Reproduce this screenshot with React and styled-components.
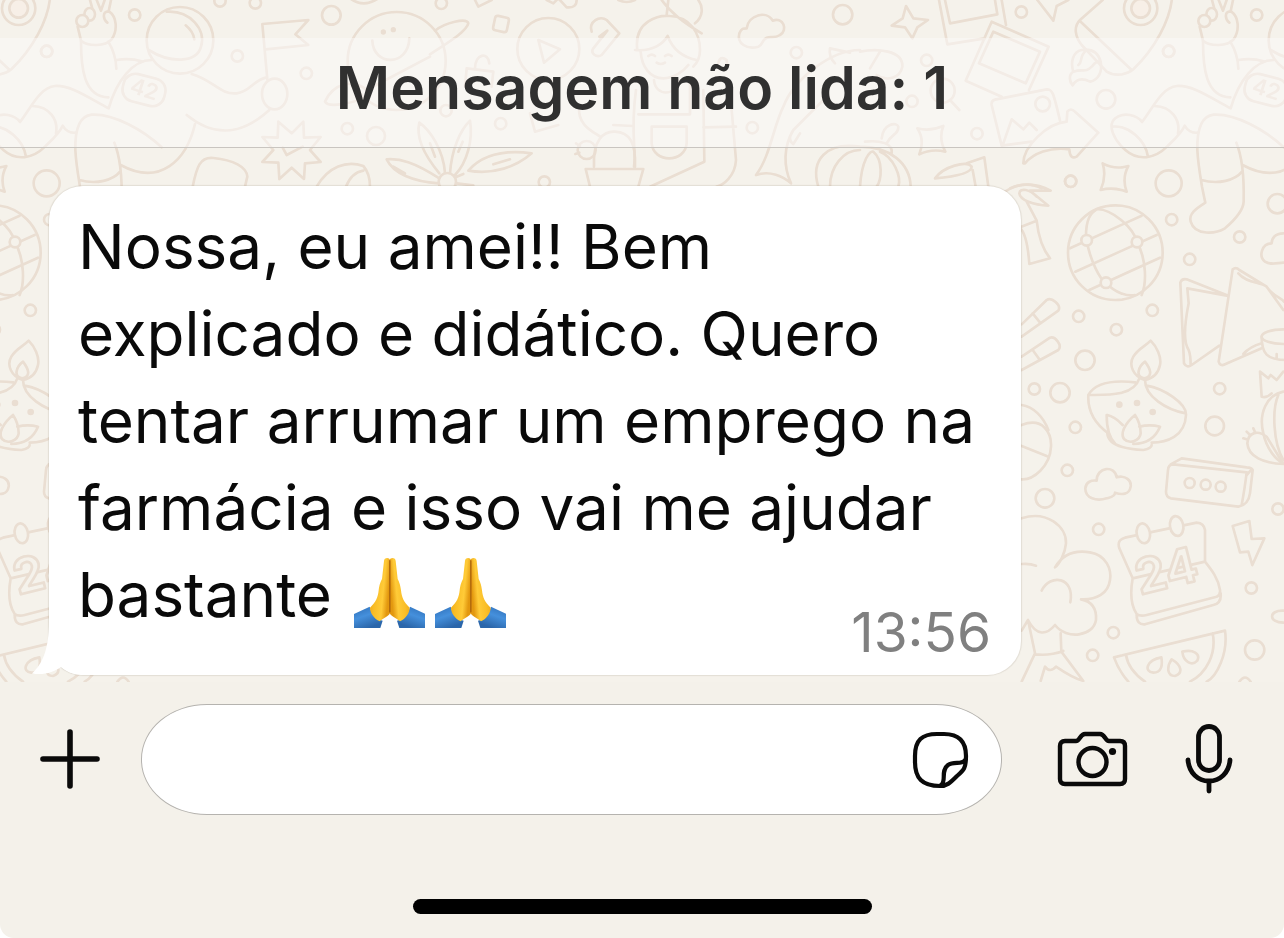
import React from "react";
import styled, { createGlobalStyle } from "styled-components";

const GlobalStyle = createGlobalStyle`
  * { box-sizing: border-box; }
  body {
    margin: 0;
    background: #ffffff;
    font-family: Inter, "Liberation Sans", sans-serif;
    color: #0a0a0a;
  }
`;

const Screen = styled.div`
  display: flex;
  flex-direction: column;
  min-height: 100vh;
  background: #f4f1ea;
  border-radius: 0 0 14px 14px;
  overflow: hidden;
`;

const Chat = styled.main`
  position: relative;
  flex: 1;
  padding: 38px 0 7px;
  background: #f5f2eb;
`;

const Wallpaper = styled.svg`
  position: absolute;
  inset: 0;
  width: 100%;
  height: 100%;
`;

const UnreadBanner = styled.h1`
  position: relative;
  margin: 0 0 38px;
  padding: 12px 16px 21px;
  border-bottom: 1px solid #c9c5c0;
  background: rgba(251, 250, 249, 0.5);
  color: #303030;
  font-size: 59px;
  font-weight: 600;
  line-height: 76px;
  text-align: center;
`;

const Bubble = styled.article`
  position: relative;
  margin: 0 263px 0 49px;
  padding: 17px 30px 13px 29px;
  border-radius: 34px;
  background: #ffffff;
  box-shadow: 0 0 1px 1px rgba(90, 70, 50, 0.12);
`;

const Tail = styled.svg`
  position: absolute;
  left: -18px;
  bottom: 0;
  width: 60px;
  height: 60px;
`;

const Message = styled.p`
  position: relative;
  margin: 0;
  font-size: 62px;
  line-height: 87px;
`;

const Emoji = styled.svg`
  width: 71px;
  height: 71px;
  margin: 0 5px;
  vertical-align: -11px;
`;

const NoBreak = styled.span`
  white-space: nowrap;
`;

const Time = styled.time`
  display: block;
  position: relative;
  width: fit-content;
  margin: -36px 0 0 auto;
  color: #808080;
  font-size: 55px;
  line-height: 60px;
`;

const Footer = styled.footer`
  padding: 22px 51px 24px 40px;
`;

const Composer = styled.form`
  display: flex;
  align-items: center;
`;

const IconButton = styled.button`
  display: flex;
  flex: none;
  margin: 0;
  padding: 0;
  border: 0;
  background: none;
  color: #0a0a0a;
  cursor: pointer;

  svg {
    overflow: visible;
  }
`;

const Field = styled.div`
  display: flex;
  flex: 1;
  align-items: center;
  min-width: 0;
  height: 111px;
  margin: 0 56px 0 41px;
  padding: 0 33px 0 44px;
  border: 1px solid #b5b3af;
  border-radius: 66px / 55px;
  background: #ffffff;
`;

const TextBox = styled.input`
  flex: 1;
  min-width: 0;
  height: 90px;
  border: 0;
  outline: 0;
  background: transparent;
  color: inherit;
  font: inherit;
  font-size: 62px;
`;

const Trailing = styled.div`
  display: flex;
  align-items: center;
  gap: 57px;
`;

const HomeIndicator = styled.div`
  width: 459px;
  max-width: 60%;
  height: 15px;
  margin: 84px auto 0;
  border-radius: 8px;
  background: #000000;
`;

const Centered = styled.div`
  margin: 0 -51px 0 -40px;
`;

const PAPER = "#f5f2eb";
const INK = "#eaded2";

function Dots({ points }) {
  return points.map(([x, y, r = 17]) => <circle key={`${x}-${y}`} cx={x} cy={y} r={r} />);
}

function Astronaut() {
  return (
    <g>
      <path d="M270 0L277 26M290 0L303 32L314 0M333 0L326 34C305 34 310 60 322 68M328 35C350 50 354 90 335 118C315 140 265 140 243 122L233 80" />
      <ellipse cx="269" cy="43" rx="16" ry="19" />
      <circle cx="247" cy="63" r="18" fill={PAPER} />
      <path d="M243 124C243 200 250 290 325 292M325 125C340 150 348 170 349 206M350 180C380 175 405 178 425 184" />
      <circle cx="540" cy="121" r="100" />
      <path d="M500 35C570 30 620 90 603 140C590 190 510 190 446 150M557 76Q580 95 583 118" />
      <path d="M455 180C400 180 350 240 326 325C260 290 210 255 165 258C120 262 95 320 60 366C45 345 5 335-20 355C-45 375-25 420 10 450C50 485 100 475 135 440C160 415 178 400 188 377C195 390 210 400 228 398M98 318C150 320 175 360 168 400M-30 380C20 375 70 420 78 470" />
      <path d="M485 442C430 390 340 340 275 344C235 348 225 400 226 450C228 490 235 530 240 560L250 608C224 625 199 640 206 665C219 710 284 700 309 685C344 655 364 630 365 605C366 560 367 485 343 428M238 540C290 555 340 540 360 515M362 495C480 560 560 480 585 372M560 345C640 410 720 410 808 330M575 222C640 240 660 285 710 280C750 275 760 240 800 232" />
      <ellipse cx="824" cy="282" rx="38" ry="46" />
      <path d="M802 238L787 72L925 60L886 103L925 135L797 148" />
      <rect x="368" y="228" width="128" height="84" rx="36" transform="rotate(14 432 270)" />
      <text x="386" y="276" fontSize="66" fontWeight="600" fill={INK} stroke="none" transform="rotate(18 386 276)">42</text>
    </g>
  );
}

function TopLeftDoodles() {
  return (
    <g transform="scale(0.33333)">
      <Astronaut />
      <Dots points={[[404, 45], [140, 154], [712, 168], [919, 220], [660, 3], [766, 9], [994, 46, 28], [1042, 386], [1128, 408, 27], [140, 550, 39], [1190, 183, 147]]} />
      <path d="M578 560C590 500 600 470 640 474C700 480 740 500 742 530L735 560M835 365L875 400L910 365L912 413L962 411L930 450L962 486L915 490L912 537L875 503L838 537L835 488L787 486L820 450L787 411L833 413ZM848 443L860 465L908 440M950 560C985 500 1040 480 1090 498C1105 515 1110 540 1110 560M1038 560C1050 530 1070 515 1090 512" />
      <path d="M1117 122C1120 200 1225 200 1228 115M1290 170L1100 270C1060 235 1000 250 975 305C985 325 1060 310 1100 290M1050-5Q1090 25 1135-5" />
      <g fill={INK} stroke="none"><circle cx="1150" cy="96" r="8" /><circle cx="1180" cy="89" r="8" /></g>
    </g>
  );
}

function TopMiddleDoodles() {
  return (
    <g transform="translate(430 0) scale(0.33333)">
      <Dots points={[[34, 10], [48, 332], [212, 371], [967, 383], [1099, 158], [1238, 44, 29], [343, 546], [355, 147, 93], [470, 450, 27], [52, 545, 26]]} />
      <path d="M15 92C45 68 110 52 115 70C110 95 50 130 0 163M135 0L145 20L185 0M350 0L370 10L385-5L410 22Q440 25 440 0M565 0Q590 12 615 0" />
      <rect x="192" y="50" width="42" height="44" rx="8" transform="rotate(12 213 72)" />
      <path d="M325 120L390 148L342 188ZM485 95C475 65 510 45 530 60L568 100L515 165C500 175 480 160 490 145L532 92L508 110" />
      <path d="M622 150C610 60 690 45 720 48C780 50 810 100 810 150C810 170 800 190 790 200M615 150C670 155 700 130 713 108C725 140 750 170 800 180M632 155C635 200 660 235 700 235C730 235 760 215 775 195M710 45L715 0M795 70C820 50 820 20 805 0M695 0C730 50 780 80 815 100M655 168Q665 160 675 168M705 168Q715 160 725 168M680 188Q692 196 705 188" />
      <path d="M672 240C675 290 740 290 745 240M618 270C600 400 620 450 612 500M665 380H770V430C765 490 670 490 665 430ZM625 343H778M780 240V343M820 270L823 485L660 560M905 330L918 480C915 530 880 555 860 560M820 382L918 380" />
      <path d="M480 560L467 507H640L625 560M492 500C488 420 520 393 555 395C600 397 618 430 615 500M448 320C440 380 500 400 510 410M550 375L608 378M438 430L450 438M436 462L448 458" />
      <path d="M1015 112C995 115 1000 135 985 140C950 150 920 130 928 100C935 85 940 85 950 85C955 45 1010 30 1028 62C1060 50 1075 90 1050 105C1035 115 1025 110 1015 112" />
      <path d="M978 525C1020 470 1030 380 1060 320C1090 240 1200 150 1290 150M978 525C1020 510 1060 530 1083 550C1060 500 1060 440 1090 390L1190 290M1260 158L1200 145Q1195 170 1215 190M1090 390Q1070 420 1090 432L1110 400M865 190Q870 165 890 180L892 200M135 205C135 160 175 155 178 190M105 260L110 205L190 215L185 260M300 340L315 395L385 375" />
      <path d="M28 520C-30 450-40 400-32 368C0 390 40 450 45 519M60 519C65 450 90 390 120 362C130 420 110 490 75 525M115 512C160 460 230 450 305 460C260 500 190 525 115 512M28 535C-50 485-90 475-130 478C-110 520-50 545 26 550M-110 500L-75 520M190 493L240 478M0 430L15 470M85 455L98 425M80 530L100 522M80 550L130 556" />
    </g>
  );
}

function TopRightDoodles() {
  return (
    <g transform="translate(860 0) scale(0.33333)">
      <Dots points={[[484, 36], [200, 181], [156, 304], [351, 401], [738, 298, 28], [926, 154], [632, 544], [548, 312, 22], [248, 272, 36], [842, 25, 50]]} />
      <circle cx="842" cy="25" r="28" fill="#f7efe7" />
      <path d="M728 0L660 60C640 80 645 110 665 135L740 215C765 230 800 225 820 208C880 150 935 60 937-20M662 65L815 210" />
      <path d="M665 150C640 155 630 185 640 215C625 225 628 245 638 256C650 235 670 235 690 245C715 240 728 215 722 185C715 160 700 145 665 150M680 150C655 170 670 185 655 195M640 215C670 205 675 220 695 200C700 195 710 180 720 185" />
      <path d="M138 18L160 55L204 60L172 82L157 115L135 82L95 77L128 55ZM237 0L262 133L375 115M255 0L270 70L412 43L405 0M425 0L438 75M395 65L566 140L507 270M395 65L317 242L425 290M400 95L540 155L497 250L357 190ZM515 425L425 437L395 315Q393 302 405 299L560 268C577 268 580 275 600 362M430 430L455 358L490 388L508 368L530 390" />
      <path d="M490 490C490 440 560 370 620 365L622 335Q632 322 645 335L715 398L650 470Q630 480 628 448C570 440 520 460 495 490ZM270 300L298 330M172 385Q210 395 250 378Q235 415 256 455Q215 445 178 463Q195 420 172 385ZM532 0L580 62L590 18L625 0" />
      <path d="M-125 560C-150 480-100 425 0 440C90 440 150 490 152 560M-90 560C-90 500-50 450 0 450M0 560C5 480 30 450 40 455C70 480 65 540 50 560M60 455C100 470 125 530 115 560M15 425C60 420 100 430 95 460M65 415C70 370 110 365 115 380C115 405 95 400 80 430M0 155C50 145 130 150 127 200C120 235 80 245 50 225M60 155L30 205" />
      <path d="M225 535C250 500 320 480 335 500C335 520 280 530 225 535M320 490L373 472L385 560M338 510L347 560M450 565C480 550 520 550 545 565" />
    </g>
  );
}

function UpperRightDoodles() {
  return (
    <g transform="translate(1000 150) scale(0.33333)">
      <Dots points={[[212, 94], [515, 209], [719, 261], [569, 328], [457, 481], [236, 499], [349, 539], [255, 631, 29], [180, 728, 29], [103, 717], [659, 716], [226, 832], [644, 828, 28], [832, 161, 29], [346, 308, 142]]} />
      <path d="M308 40Q345 60 385 48Q365 85 380 125Q340 110 302 120Q320 80 308 40ZM15 125C60 95 110 100 152 122L90 122L145 167C100 165 60 150 58 130C60 112 90 118 110 140M80 155L110 212C115 260 130 300 150 325L88 342C85 300 80 260 64 238M64 230L110 212" />
      <path d="M210 295L425 197M226 365L470 255M268 420L480 323M258 258C258 210 270 190 290 178C330 175 400 230 411 276C440 330 440 400 425 435M260 271C270 330 300 390 318 398C345 430 385 440 405 435" />
      <g fill={PAPER}><Dots points={[[260, 271, 16], [411, 276, 16], [318, 398, 16]]} /></g>
      <path d="M65 523L140 450C155 440 185 465 175 482L65 560M98 490L122 520M65 620L150 563C165 558 188 585 175 600L65 660M98 600L118 628M850 250C825 250 815 265 815 280C785 280 775 320 795 335C810 345 825 340 850 338" />
      <path d="M685 437L560 388Q545 385 541 398L552 640Q560 655 575 645L658 587M680 437L562 415L566 460C550 540 552 580 566 600C572 615 572 625 572 645M850 480L800 410L718 360Q708 350 698 358L656 635Q660 650 675 643L785 595M715 370C740 400 780 395 800 410C820 440 840 440 852 455M730 612Q750 590 785 580" />
      <ellipse cx="850" cy="560" rx="65" ry="22" />
      <path d="M785 560C785 610 800 630 860 630M830 612V626" />
      <path d="M452 572C470 590 485 620 480 645C475 670 460 685 435 690C400 680 385 645 400 620C415 595 435 590 452 572ZM435 635C450 655 462 680 432 685C405 680 415 650 435 635ZM265 735C290 690 360 692 405 697M265 735C320 735 400 740 418 685M435 690C435 740 500 780 557 790M440 707C490 715 560 760 558 795C555 860 500 878 455 878M265 735C262 790 290 825 325 850" />
      <g fill={INK} stroke="none"><Dots points={[[358, 764, 10], [411, 759, 10], [458, 786, 10]]} /></g>
      <path d="M320 795C320 830 325 860 345 880M322 795Q345 800 368 825M405 795C375 820 360 850 372 867C390 885 420 870 422 850C422 830 415 810 405 795M418 830Q450 822 480 830Q460 880 400 882M322 850Q325 895 430 900Q455 895 455 885M785 740L780 665L805 685L812 675L830 690L850 665M785 740Q800 745 815 730M850 725C800 735 775 790 790 850C800 900 830 930 850 940M835 735C815 780 820 880 850 930M65 765C100 770 130 800 145 840" />
    </g>
  );
}

function LowerRightDoodles() {
  return (
    <g transform="translate(1000 420) scale(0.33333)">
      <Dots points={[[202, 151], [135, 235, 28], [296, 328], [340, 638], [278, 706], [754, 504], [764, 690, 29], [834, 267], [569, 189, 15], [617, 194, 15], [662, 200, 15]]} />
      <path d="M742 70C745 35 775 30 800 50L850 132C790 130 745 110 742 70M750 45L740 35M765 36L760 25M740 58L730 55M65 15C130-10 155 40 153 80C150 140 100 180 65 178M65 78L140 108" />
      <path d="M320 235C290 245 255 235 256 205C258 185 275 180 290 182C290 140 345 135 350 172C375 165 395 180 392 200C388 225 365 225 345 218C345 230 330 232 320 235ZM740 157L520 133Q505 133 504 150L498 215Q498 230 512 235L715 260Q745 255 750 220L758 150Q755 142 740 142L545 115L512 133M740 157Q735 200 725 255M740 165L755 148" />
      <path d="M65 295C140 270 200 320 198 370C195 400 180 430 165 442C190 400 230 390 270 397C320 405 335 450 330 480C325 520 290 540 243 538C280 545 290 570 288 600C280 650 200 660 165 615C140 645 110 650 84 600L65 632M65 432Q90 430 108 437M125 512C150 460 225 470 211 547M84 600L105 700L65 785M182 640L184 695L250 783C220 775 190 755 168 740Q150 760 135 740L122 783M105 703Q150 708 190 693" />
      <path d="M590 308L375 353Q350 360 358 385L398 475C390 520 395 560 410 582Q420 590 440 585L650 530Q662 525 660 510C655 475 635 450 615 425V330Q612 310 590 308M410 585Q410 615 435 613L640 555Q665 550 662 520M398 475L615 425" />
      <g fill={PAPER}>
        <ellipse cx="430" cy="340" rx="20" ry="30" transform="rotate(-10 430 340)" />
        <ellipse cx="530" cy="318" rx="20" ry="30" transform="rotate(-10 530 318)" />
        <text x="420" y="525" fontSize="146" fontWeight="700" transform="rotate(-14 420 525)">24</text>
      </g>
      <path d="M698 318L748 303L755 357L793 355L757 435L745 395L720 397ZM385 785Q355 750 342 712L675 632C685 700 650 770 620 785M378 705Q385 750 435 785M638 640C650 700 620 760 570 785M484 712C440 720 430 755 460 758C485 758 488 735 484 712ZM515 718C500 740 500 768 525 768C550 760 545 735 515 718ZM547 695C550 725 575 740 592 722C602 700 580 688 547 695ZM850 572C805 570 805 608 850 608M718 785Q735 760 752 785" />
    </g>
  );
}

const TILE = 1122;

function ChatWallpaper() {
  return (
    <Wallpaper aria-hidden="true">
      <defs>
        <g id="doodles" fill="none" stroke={INK} strokeWidth="8" strokeLinecap="round" strokeLinejoin="round">
          <TopLeftDoodles />
          <TopMiddleDoodles />
          <TopRightDoodles />
          <UpperRightDoodles />
          <LowerRightDoodles />
        </g>
        <pattern id="wallpaper" width={TILE} height={TILE} patternUnits="userSpaceOnUse">
          <use href="#doodles" />
          <use href="#doodles" x={-TILE} />
          <use href="#doodles" x={TILE} />
        </pattern>
      </defs>
      <rect width="100%" height="100%" fill="url(#wallpaper)" />
    </Wallpaper>
  );
}

function HandHalf() {
  return (
    <>
      <path d="M-2 172L47 149C53 172 66 187 86 191L79 213H-2Z" fill="url(#sleeve)" />
      <path d="M90 12C90 0 107 0 108 10V168C105 178 86 184 77 193C60 185 48 168 48 152C66 136 72 120 74 100C76 82 80 74 84 66L90 12Z" fill="url(#skin)" />
      <path d="M107 10V166" fill="none" stroke="#a8600d" strokeWidth="3" />
    </>
  );
}

function FoldedHands({ label }) {
  return (
    <Emoji viewBox="0 0 213 213" role="img" aria-label={label}>
      <defs>
        <linearGradient id="skin" x1="0" x2="1" y1="0" y2="0.3">
          <stop offset="0" stopColor="#e59a12" />
          <stop offset="0.4" stopColor="#f9bd26" />
          <stop offset="0.75" stopColor="#ffcb38" />
          <stop offset="1" stopColor="#e3980f" />
        </linearGradient>
        <linearGradient id="sleeve" x1="0" x2="0.5" y1="0" y2="1">
          <stop offset="0" stopColor="#2d6cb5" />
          <stop offset="0.5" stopColor="#4590dc" />
          <stop offset="1" stopColor="#2b66aa" />
        </linearGradient>
      </defs>
      <HandHalf />
      <g transform="translate(215 0) scale(-1 1)"><HandHalf /></g>
    </Emoji>
  );
}

const line = { fill: "none", stroke: "currentColor", strokeLinecap: "round", strokeLinejoin: "round", "aria-hidden": true };

const PlusIcon = () => (
  <svg width="60" height="60" viewBox="0 1 60 60" {...line} strokeWidth="5.6">
    <path d="M30 3V57M3 30H57" />
  </svg>
);

const StickerIcon = () => (
  <svg width="56" height="56" viewBox="0 0 56 56" {...line} strokeWidth="4.2">
    <path d="M28 54C10 54 3 46 3 30V24C3 8 10 2 25 2H32C46 2 54 9 54 24C54 36 52 38 45 44C38 51 35 54 28 54ZM29 53C35 49 28 39 36 33C42 29 50 33 53 28" />
  </svg>
);

const CameraIcon = () => (
  <svg width="70" height="56" viewBox="0 2 70 56" {...line} strokeWidth="4.4">
    <path d="M7 11H18C22 11 22 4 27 4H42C47 4 47 11 51 11H62Q67 11 67 16V49Q67 54 62 54H7Q2 54 2 49V16Q2 11 7 11Z" />
    <circle cx="34.5" cy="32" r="14" />
    <circle cx="54.5" cy="21.5" r="3.6" fill="currentColor" stroke="none" />
  </svg>
);

const MicIcon = () => (
  <svg width="48" height="70" viewBox="0 1 48 70" {...line} strokeWidth="4.8">
    <rect x="13.5" y="2.5" width="21" height="44" rx="10.5" />
    <path d="M3 36C4 49 13 57 24 57C35 57 44 49 45 36M24 57V67" />
  </svg>
);

export default function App() {
  return (
    <>
      <GlobalStyle />
      <Screen>
        <Chat>
          <ChatWallpaper />
          <UnreadBanner>Mensagem não lida: 1</UnreadBanner>
          <Bubble>
            <Tail viewBox="0 0 60 60" aria-hidden="true">
              <path d="M18 6C18 36 11 49 1 58.500C13 60.500 23 57 30 52C37 58 45 60 55 60V6Z" fill="#ffffff" />
            </Tail>
            <Message>
              Nossa, eu amei!! Bem explicado e didático. Quero tentar arrumar um emprego na farmácia e isso vai me ajudar bastante{" "}
              <NoBreak>
                <FoldedHands label="🙏" />
                <FoldedHands label="🙏" />
              </NoBreak>
            </Message>
            <Time dateTime="13:56">13:56</Time>
          </Bubble>
        </Chat>
        <Footer>
          <Composer onSubmit={(event) => event.preventDefault()}>
            <IconButton type="button" aria-label="Anexar"><PlusIcon /></IconButton>
            <Field>
              <TextBox type="text" aria-label="Mensagem" />
              <IconButton type="button" aria-label="Figurinhas"><StickerIcon /></IconButton>
            </Field>
            <Trailing>
              <IconButton type="button" aria-label="Câmera"><CameraIcon /></IconButton>
              <IconButton type="button" aria-label="Gravar áudio"><MicIcon /></IconButton>
            </Trailing>
          </Composer>
          <Centered><HomeIndicator /></Centered>
        </Footer>
      </Screen>
    </>
  );
}
